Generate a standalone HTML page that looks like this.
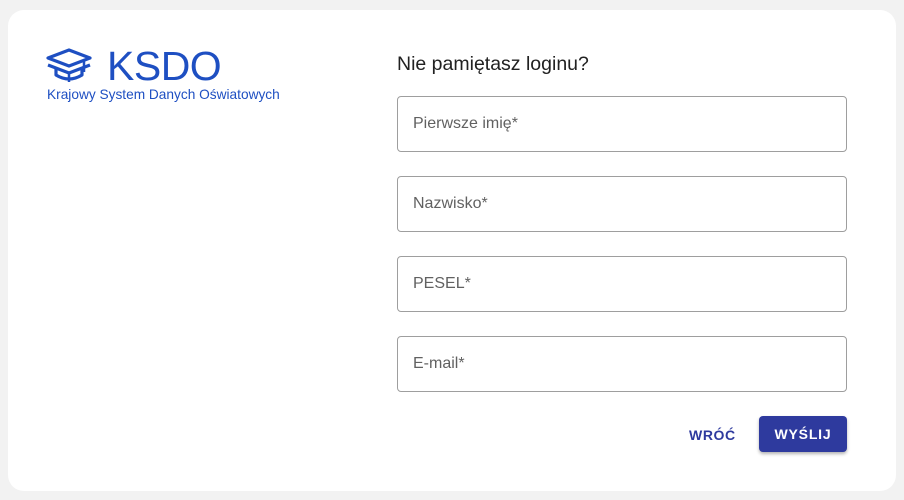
<!DOCTYPE html><html><head><meta charset="utf-8"><style>
body{margin:0;width:904px;height:500px;background:#f2f2f2;font-family:"Liberation Sans",sans-serif;position:relative;overflow:hidden}
.card{position:absolute;left:8px;top:10px;width:888px;height:481px;background:#fff;border-radius:16px}
.a{position:absolute}
.inp{position:absolute;left:397px;width:448px;height:54px;border:1px solid #9e9e9e;border-radius:4px;}
.inp span{position:absolute;left:15px;top:18px;font-size:16px;color:#616161}
</style></head><body><div class="card"></div>
<svg class="a" style="left:46px;top:48px" width="46" height="36" viewBox="0 0 46 36" fill="none" stroke="#1e4fc2" stroke-width="3.2" stroke-linejoin="round">
<path d="M2 10 L23 2 L44 10 L23 18 Z"/><path d="M2 17 L23 25 L44 17"/><path d="M10 20 V27 Q23 35 36 27 V20"/><path d="M38 12 V24" stroke-width="2.5"/><path d="M23 25 V34" stroke-width="2.5"/></svg>
<div class="a" style="left:107px;top:42px;font-size:41px;color:#1e4fc2;line-height:48px;letter-spacing:-0.5px">KSDO</div>
<div class="a" style="left:47px;top:87px;font-size:13.7px;color:#1e4fc2">Krajowy System Danych Oświatowych</div>
<div class="a" style="left:397px;top:53px;font-size:19.5px;color:#212121">Nie pamiętasz loginu?</div>
<div class="inp" style="top:96px"><span>Pierwsze imię*</span></div>
<div class="inp" style="top:176px"><span>Nazwisko*</span></div>
<div class="inp" style="top:256px"><span>PESEL*</span></div>
<div class="inp" style="top:336px"><span>E-mail*</span></div>
<div class="a" style="left:689px;top:427px;font-size:14px;font-weight:bold;letter-spacing:0.6px;color:#2e3a9e">WRÓĆ</div>
<div class="a" style="left:759px;top:416px;width:88px;height:36px;background:#2e3a9e;border-radius:4px;box-shadow:0 2px 3px rgba(0,0,0,.3);color:#fff;font-size:14px;font-weight:bold;letter-spacing:0.8px;text-align:center;line-height:36px">WYŚLIJ</div>
</body></html>
